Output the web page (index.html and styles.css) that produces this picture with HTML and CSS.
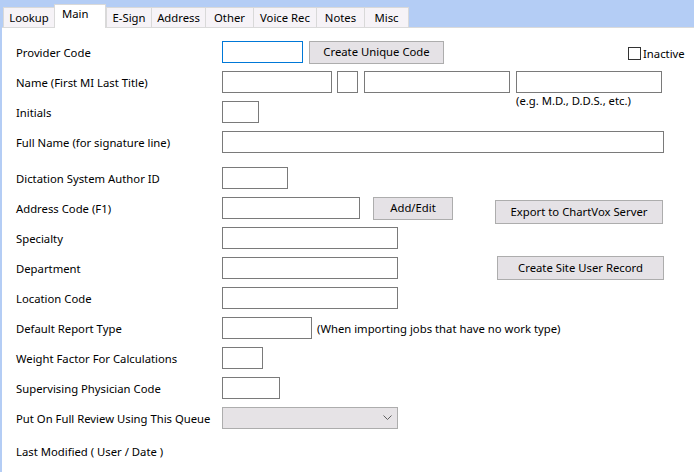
FILE: index.html
```html
<!DOCTYPE html>
<html>
<head>
<meta charset="utf-8">
<link rel="stylesheet" href="styles.css">
</head>
<body>
<div class="window">
  <div class="tabbar">
    <div class="tab t-lookup">Lookup</div>
    <div class="tab active t-main">Main</div>
    <div class="tab t-esign">E-Sign</div>
    <div class="tab t-address">Address</div>
    <div class="tab t-other">Other</div>
    <div class="tab t-voice">Voice Rec</div>
    <div class="tab t-notes">Notes</div>
    <div class="tab t-misc">Misc</div>
  </div>
  <div class="panel">
    <div class="form">
      <div class="row">
        <span class="label">Provider Code</span>
        <span class="input focus w-provider"></span>
        <span class="btn btn-unique">Create Unique Code</span>
        <span class="check-wrap"><span class="checkbox"></span><span>Inactive</span></span>
      </div>
      <div class="row">
        <span class="label">Name (First MI Last Title)</span>
        <span class="input w-first"></span>
        <span class="input w-mi"></span>
        <span class="input w-last"></span>
        <span class="input w-title"></span>
      </div>
      <div class="row">
        <span class="label">Initials</span>
        <span class="input w-initials"></span>
        <span class="hint hint-title">(e.g. M.D., D.D.S., etc.)</span>
      </div>
      <div class="row">
        <span class="label">Full Name (for signature line)</span>
        <span class="input w-full"></span>
      </div>
      <div class="row row-gap">
        <span class="label">Dictation System Author ID</span>
        <span class="input w-dict"></span>
      </div>
      <div class="row">
        <span class="label">Address Code (F1)</span>
        <span class="input w-addr"></span>
        <span class="btn btn-add">Add/Edit</span>
        <span class="btn btn-export">Export to ChartVox Server</span>
      </div>
      <div class="row">
        <span class="label">Specialty</span>
        <span class="input w-wide"></span>
      </div>
      <div class="row">
        <span class="label">Department</span>
        <span class="input w-wide"></span>
        <span class="btn btn-site">Create Site User Record</span>
      </div>
      <div class="row">
        <span class="label">Location Code</span>
        <span class="input w-wide"></span>
      </div>
      <div class="row">
        <span class="label">Default Report Type</span>
        <span class="input w-report"></span>
        <span class="hint hint-report">(When importing jobs that have no work type)</span>
      </div>
      <div class="row">
        <span class="label">Weight Factor For Calculations</span>
        <span class="input w-weight"></span>
      </div>
      <div class="row">
        <span class="label">Supervising Physician Code</span>
        <span class="input w-super"></span>
      </div>
      <div class="row">
        <span class="label">Put On Full Review Using This Queue</span>
        <span class="select w-wide">
          <svg class="chev" width="9" height="6" viewBox="0 0 9 6"><polyline points="0.5,0.5 4.5,4.5 8.5,0.5" fill="none" stroke="#606060" stroke-width="1"/></svg>
        </span>
      </div>
      <div class="row row-last">
        <span class="label">Last Modified ( User / Date )</span>
      </div>
    </div>
  </div>
</div>
</body>
</html>
```
FILE: styles.css
```css
html, body {
  margin: 0;
  padding: 0;
}
body {
  width: 694px;
  height: 472px;
  overflow: hidden;
  background: #b4cdf5;
  font-family: "Noto Sans", "Open Sans", sans-serif;
  font-size: 11.3px;
  color: #000;
}
.window {
  display: flex;
  flex-direction: column;
  height: 472px;
}
.tabbar {
  display: flex;
  align-items: flex-end;
  height: 27px;
  padding-left: 3px;
  box-sizing: border-box;
}
.tab {
  height: 20px;
  box-sizing: border-box;
  border: 1px solid #d9d9d9;
  border-bottom: none;
  border-right: none;
  background: #f6f3f7;
  display: flex;
  align-items: center;
  justify-content: center;
  line-height: 18px;
  padding-top: 1px;
}
.tab.active {
  height: 24px;
  margin-bottom: -1px;
  background: #fff;
  border: 1px solid #d9d9d9;
  border-bottom: none;
  padding-top: 0;
  padding-bottom: 5px;
  justify-content: flex-start;
  padding-left: 7px;
  z-index: 1;
}
.t-lookup { width: 51px; }
.t-main { width: 52px; }
.t-esign { width: 45px; }
.t-address { width: 54px; }
.t-other { width: 48px; }
.t-voice { width: 63px; }
.t-notes { width: 48px; }
.t-misc { width: 45px; border-right: 1px solid #d9d9d9; }

.panel {
  flex: 1;
  margin-left: 2px;
  background: #fff;
  border-top: 1px solid #dadada;
}
.form {
  padding: 9px 0 0 14px;
  display: flex;
  flex-direction: column;
}
.row {
  display: flex;
  align-items: center;
  height: 30px;
}
.row-gap {
  margin-top: 6px;
}
.row-last {
  height: 36px;
}
.label {
  width: 206px;
  flex: none;
  white-space: nowrap;
}
.input {
  display: block;
  height: 22px;
  box-sizing: border-box;
  border: 1px solid #7a7a7a;
  background: #fff;
  flex: none;
}
.input.focus {
  border-color: #0078d7;
}
.w-provider { width: 81px; }
.w-first { width: 110px; }
.w-mi { width: 21px; margin-left: 5px; }
.w-last { width: 146px; margin-left: 6px; }
.w-title { width: 146px; margin-left: 6px; }
.w-initials { width: 37px; }
.w-full { width: 442px; }
.w-dict { width: 66px; }
.w-addr { width: 138px; }
.w-wide { width: 176px; }
.w-report { width: 90px; }
.w-weight { width: 41px; }
.w-super { width: 58px; }

.btn {
  display: flex;
  align-items: center;
  justify-content: center;
  height: 23px;
  box-sizing: border-box;
  border: 1px solid #adadad;
  background: #e5e2e6;
  flex: none;
  white-space: nowrap;
  padding-bottom: 1px;
}
.btn-unique { width: 135px; margin-left: 6px; }
.btn-add { width: 80px; margin-left: 13px; }
.btn-export { width: 168px; height: 24px; margin-left: 42px; align-self: flex-start; margin-top: 7px; }
.btn-site { width: 167px; height: 24px; margin-left: 99px; }

.check-wrap {
  display: flex;
  align-items: center;
  margin-left: 184px;
  margin-top: 2px;
}
.checkbox {
  width: 13px;
  height: 13px;
  box-sizing: border-box;
  border: 1px solid #333;
  background: #fff;
  margin-right: 2px;
}
.hint {
  white-space: nowrap;
}
.hint-title {
  margin-left: 257px;
  align-self: flex-start;
  line-height: 14px;
  margin-top: -3px;
}
.hint-report {
  margin-left: 5px;
}
.select {
  display: flex;
  align-items: center;
  justify-content: flex-end;
  height: 22px;
  box-sizing: border-box;
  border: 1px solid #adadad;
  background: #e6e3e6;
  padding-right: 5px;
}
.chev {
  display: block;
}
```
